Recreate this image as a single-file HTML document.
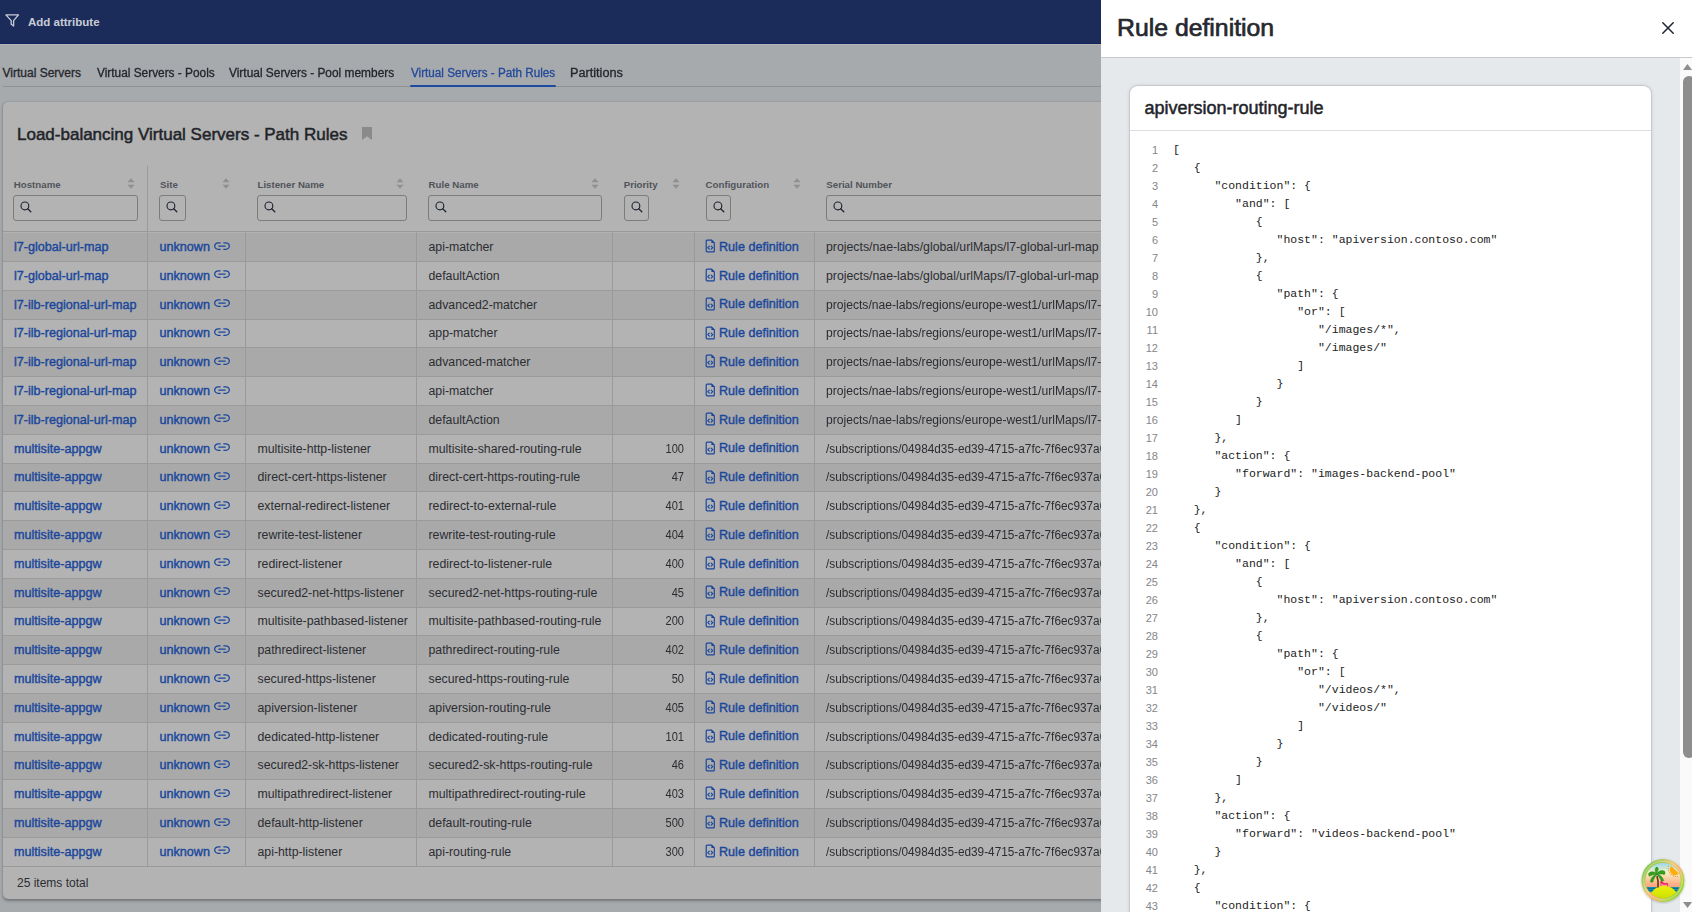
<!DOCTYPE html>
<html><head><meta charset="utf-8">
<style>
*{box-sizing:border-box}
html,body{margin:0;padding:0;width:1692px;height:912px;overflow:hidden;background:#a6aaad;font-family:"Liberation Sans",sans-serif;position:relative}
.abs{position:absolute}
#nav{left:0;top:0;width:1692px;height:44px;background:#1b2c5b;border-bottom:1px solid #14215a}
#nav .t{left:28px;top:15.5px;font-size:11.5px;font-weight:700;color:#c9ccd6;white-space:nowrap}
#nav svg{position:absolute;left:5px;top:13.6px}
#navline{left:0;top:44px;width:1101px;height:1px;background:#b3b5b6}
.tab{top:66px;font-size:12px;color:#25262c;white-space:nowrap;line-height:14px;-webkit-text-stroke:0.3px currentColor}
.tab.act{color:#23499a}
#tabline{left:3px;top:86px;width:1098px;height:1px;background:#8e9194}
#tabul{left:410px;top:85px;width:146px;height:2px;background:#1c4aa0;border-radius:1px}
#card{left:3px;top:102px;width:1200px;height:797px;background:#b3b3b3;border-radius:5px;box-shadow:0 1.5px 3px rgba(0,0,0,0.3),0 0 1px rgba(0,0,0,0.2)}
#title{left:17px;top:124.5px;font-size:17px;font-weight:400;color:#222429;white-space:nowrap;line-height:20px;-webkit-text-stroke:0.5px currentColor}
#bm{left:361.5px;top:127px}
.hl{top:179px;font-size:9.7px;font-weight:700;color:#50545a;white-space:nowrap;line-height:11px}
.sort{top:178px;color:#8e9092}
.sort svg,.sb svg,.lk svg,.fi svg{display:block}
.sb{top:195px;height:26px;border:1px solid #7c7c7c;border-radius:3px}
.sb svg{position:absolute;left:6px;top:5px;color:#1f2530}
.row{left:3px;width:1098px;height:29px}
.row.s{background:#a9a9a9}
.hd{top:231px;left:3px;width:1098px;height:1px;background:#999}
.rl{left:3px;width:1098px;height:1px;background:#9a9a9a}
.vl{width:1px;background:#9a9a9a}
.c{font-size:12.3px;color:#2c2d32;white-space:nowrap;line-height:14px}
.lnk{font-size:12.6px;font-weight:400;-webkit-text-stroke:0.4px currentColor;color:#1a479c;white-space:nowrap;line-height:14px}
.lk{position:absolute;color:#1a479c}
.fi{position:absolute;color:#1a479c}
#foot{left:17px;top:876px;font-size:12px;color:#2c2d32;white-space:nowrap;line-height:14px}
#drawer{left:1101px;top:0;width:591px;height:912px;background:#e6e9ec}
#dh{left:1101px;top:0;width:591px;height:58px;background:#fff;border-bottom:1px solid #c8cacd}
#dt{left:1117px;top:14px;font-size:24.8px;font-weight:400;color:#26282d;white-space:nowrap;line-height:28px;-webkit-text-stroke:0.7px currentColor}
#x{left:1662px;top:22px}
#ccard{left:1130px;top:86px;width:521px;height:900px;background:#fff;border-radius:8px;box-shadow:0 0 0 1px rgba(40,35,60,0.11), 0 0 3px 1.5px rgba(0,0,0,0.06)}
#ct{left:1144.5px;top:97.8px;font-size:18px;font-weight:400;color:#222429;white-space:nowrap;line-height:20px;-webkit-text-stroke:0.5px currentColor}
#cline{left:1130px;top:130px;width:521px;height:1px;background:#dcdde0}
.ln{left:1120px;width:38px;text-align:right;font-size:11px;color:#83868b;line-height:18px;white-space:nowrap}
.cd{left:1173px;font-family:"Liberation Mono",monospace;font-size:11.5px;color:#222;line-height:18px;white-space:pre}
#sbtrack{left:1680px;top:58px;width:12px;height:854px;background:#fafafa}
#thumb{left:1683px;top:76px;width:12px;height:682px;background:#8d8d8d;border-radius:6px}
#avatar{left:1641px;top:859px;width:44px;height:44px;overflow:visible}
</style></head><body>

<div class="abs" id="nav"><svg width="15" height="13" viewBox="0 0 15 13"><path d="M0.9 0.9h12.6L8.6 6.6v5.4L6.2 10.3V6.6z" fill="none" stroke="#c9ccd6" stroke-width="1.3" stroke-linejoin="round"/></svg><div class="abs t">Add attribute</div></div>
<div class="abs" id="navline"></div>
<div class="abs tab" style="left:2.5px;transform:scaleX(1);transform-origin:0 0">Virtual Servers</div>
<div class="abs tab" style="left:96.5px;transform:scaleX(0.988);transform-origin:0 0">Virtual Servers - Pools</div>
<div class="abs tab" style="left:229px;transform:scaleX(0.992);transform-origin:0 0">Virtual Servers - Pool members</div>
<div class="abs tab act" style="left:410.5px;transform:scaleX(0.975);transform-origin:0 0">Virtual Servers - Path Rules</div>
<div class="abs tab" style="left:570.4px;transform:scaleX(1.056);transform-origin:0 0">Partitions</div>
<div class="abs" id="tabline"></div><div class="abs" id="tabul"></div>
<div class="abs" id="card"></div>
<div class="abs" id="title">Load-balancing Virtual Servers - Path Rules</div>
<svg class="abs" id="bm" width="10" height="13" viewBox="0 0 10 13"><path d="M0 0h10v13L5 9.2 0 13z" fill="#8a8a8a"/></svg>
<div class="abs row s" style="top:233px;height:28px"></div>
<div class="abs row s" style="top:291px;height:28px"></div>
<div class="abs row s" style="top:348px;height:28px"></div>
<div class="abs row s" style="top:406px;height:28px"></div>
<div class="abs row s" style="top:464px;height:27px"></div>
<div class="abs row s" style="top:521px;height:28px"></div>
<div class="abs row s" style="top:579px;height:28px"></div>
<div class="abs row s" style="top:636px;height:28px"></div>
<div class="abs row s" style="top:694px;height:28px"></div>
<div class="abs row s" style="top:752px;height:27px"></div>
<div class="abs row s" style="top:809px;height:28px"></div>
<div class="abs hl" style="left:13.8px">Hostname</div>
<div class="abs sort" style="left:126.5px"><svg width="8" height="11" viewBox="0 0 8 11"><path d="M4 0.3L7.6 4.3H0.4z M4 10.7L7.6 6.7H0.4z" fill="currentColor"/></svg></div>
<div class="abs sb" style="left:13.4px;width:124.6px"><svg width="12" height="12" viewBox="0 0 12 12"><circle cx="4.9" cy="4.9" r="3.9" fill="none" stroke="currentColor" stroke-width="1.15"/><path d="M7.7 7.7l3.1 3.1" stroke="currentColor" stroke-width="1.3" stroke-linecap="round"/></svg></div>
<div class="abs hl" style="left:160px">Site</div>
<div class="abs sort" style="left:221.5px"><svg width="8" height="11" viewBox="0 0 8 11"><path d="M4 0.3L7.6 4.3H0.4z M4 10.7L7.6 6.7H0.4z" fill="currentColor"/></svg></div>
<div class="abs sb" style="left:159px;width:26.5px"><svg width="12" height="12" viewBox="0 0 12 12"><circle cx="4.9" cy="4.9" r="3.9" fill="none" stroke="currentColor" stroke-width="1.15"/><path d="M7.7 7.7l3.1 3.1" stroke="currentColor" stroke-width="1.3" stroke-linecap="round"/></svg></div>
<div class="abs hl" style="left:257.5px">Listener Name</div>
<div class="abs sort" style="left:395.5px"><svg width="8" height="11" viewBox="0 0 8 11"><path d="M4 0.3L7.6 4.3H0.4z M4 10.7L7.6 6.7H0.4z" fill="currentColor"/></svg></div>
<div class="abs sb" style="left:257.3px;width:149.3px"><svg width="12" height="12" viewBox="0 0 12 12"><circle cx="4.9" cy="4.9" r="3.9" fill="none" stroke="currentColor" stroke-width="1.15"/><path d="M7.7 7.7l3.1 3.1" stroke="currentColor" stroke-width="1.3" stroke-linecap="round"/></svg></div>
<div class="abs hl" style="left:428.6px">Rule Name</div>
<div class="abs sort" style="left:590.9px"><svg width="8" height="11" viewBox="0 0 8 11"><path d="M4 0.3L7.6 4.3H0.4z M4 10.7L7.6 6.7H0.4z" fill="currentColor"/></svg></div>
<div class="abs sb" style="left:428.4px;width:173.20000000000005px"><svg width="12" height="12" viewBox="0 0 12 12"><circle cx="4.9" cy="4.9" r="3.9" fill="none" stroke="currentColor" stroke-width="1.15"/><path d="M7.7 7.7l3.1 3.1" stroke="currentColor" stroke-width="1.3" stroke-linecap="round"/></svg></div>
<div class="abs hl" style="left:623.7px">Priority</div>
<div class="abs sort" style="left:672.4px"><svg width="8" height="11" viewBox="0 0 8 11"><path d="M4 0.3L7.6 4.3H0.4z M4 10.7L7.6 6.7H0.4z" fill="currentColor"/></svg></div>
<div class="abs sb" style="left:624.2px;width:24.799999999999955px"><svg width="12" height="12" viewBox="0 0 12 12"><circle cx="4.9" cy="4.9" r="3.9" fill="none" stroke="currentColor" stroke-width="1.15"/><path d="M7.7 7.7l3.1 3.1" stroke="currentColor" stroke-width="1.3" stroke-linecap="round"/></svg></div>
<div class="abs hl" style="left:705.6px">Configuration</div>
<div class="abs sort" style="left:793.2px"><svg width="8" height="11" viewBox="0 0 8 11"><path d="M4 0.3L7.6 4.3H0.4z M4 10.7L7.6 6.7H0.4z" fill="currentColor"/></svg></div>
<div class="abs sb" style="left:705.5px;width:25.5px"><svg width="12" height="12" viewBox="0 0 12 12"><circle cx="4.9" cy="4.9" r="3.9" fill="none" stroke="currentColor" stroke-width="1.15"/><path d="M7.7 7.7l3.1 3.1" stroke="currentColor" stroke-width="1.3" stroke-linecap="round"/></svg></div>
<div class="abs hl" style="left:826.3px">Serial Number</div>
<div class="abs sb" style="left:826px;width:374px"><svg width="12" height="12" viewBox="0 0 12 12"><circle cx="4.9" cy="4.9" r="3.9" fill="none" stroke="currentColor" stroke-width="1.15"/><path d="M7.7 7.7l3.1 3.1" stroke="currentColor" stroke-width="1.3" stroke-linecap="round"/></svg></div>
<div class="abs vl" style="left:147px;top:166px;height:66px"></div>
<div class="abs hd"></div>
<div class="abs rl" style="top:261px"></div>
<div class="abs rl" style="top:290px"></div>
<div class="abs rl" style="top:319px"></div>
<div class="abs rl" style="top:347px"></div>
<div class="abs rl" style="top:376px"></div>
<div class="abs rl" style="top:405px"></div>
<div class="abs rl" style="top:434px"></div>
<div class="abs rl" style="top:463px"></div>
<div class="abs rl" style="top:491px"></div>
<div class="abs rl" style="top:520px"></div>
<div class="abs rl" style="top:549px"></div>
<div class="abs rl" style="top:578px"></div>
<div class="abs rl" style="top:607px"></div>
<div class="abs rl" style="top:635px"></div>
<div class="abs rl" style="top:664px"></div>
<div class="abs rl" style="top:693px"></div>
<div class="abs rl" style="top:722px"></div>
<div class="abs rl" style="top:751px"></div>
<div class="abs rl" style="top:779px"></div>
<div class="abs rl" style="top:808px"></div>
<div class="abs rl" style="top:837px"></div>
<div class="abs rl" style="top:866px"></div>
<div class="abs vl" style="left:147px;top:232px;height:633.6px"></div>
<div class="abs vl" style="left:245px;top:232px;height:633.6px"></div>
<div class="abs vl" style="left:416px;top:232px;height:633.6px"></div>
<div class="abs vl" style="left:612px;top:232px;height:633.6px"></div>
<div class="abs vl" style="left:694px;top:232px;height:633.6px"></div>
<div class="abs vl" style="left:814px;top:232px;height:633.6px"></div>
<div class="abs lnk" style="left:14px;top:240.00px">l7-global-url-map</div>
<div class="abs lnk" style="left:159.5px;top:240.00px">unknown</div>
<div class="lk" style="left:213.8px;top:241.50px"><svg width="16" height="8.2" viewBox="0 0 16 9" preserveAspectRatio="none"><path d="M6.2 0.9H4.3a3.6 3.6 0 0 0 0 7.2h1.9M9.8 0.9h1.9a3.6 3.6 0 0 1 0 7.2h-1.9M4.8 4.5h6.4" fill="none" stroke="currentColor" stroke-width="1.3" stroke-linecap="round"/></svg></div>
<div class="abs c" style="left:428.5px;top:240.00px">api-matcher</div>
<div class="fi" style="left:705px;top:239.10px"><svg width="10" height="14" viewBox="0 0 10 14"><path d="M2.1 1.2H6.7L9.3 3.8V11.9A0.9 0.9 0 0 1 8.4 12.8H2.1A0.9 0.9 0 0 1 1.2 11.9V2.1A0.9 0.9 0 0 1 2.1 1.2Z" fill="none" stroke="currentColor" stroke-width="1.2" stroke-linejoin="round"/><path d="M6.4 0.7L9.8 4.1H6.4Z" fill="currentColor"/><path d="M4.3 7.2L2.8 8.7 4.3 10.2M6.2 7.2L7.7 8.7 6.2 10.2" fill="none" stroke="currentColor" stroke-width="1.2" stroke-linecap="round" stroke-linejoin="round"/></svg></div>
<div class="abs lnk" style="left:719px;top:239.70px">Rule definition</div>
<div class="abs c" style="left:826px;top:240.00px;transform:scaleX(1);transform-origin:0 0">projects/nae-labs/global/urlMaps/l7-global-url-map</div>
<div class="abs lnk" style="left:14px;top:268.80px">l7-global-url-map</div>
<div class="abs lnk" style="left:159.5px;top:268.80px">unknown</div>
<div class="lk" style="left:213.8px;top:270.30px"><svg width="16" height="8.2" viewBox="0 0 16 9" preserveAspectRatio="none"><path d="M6.2 0.9H4.3a3.6 3.6 0 0 0 0 7.2h1.9M9.8 0.9h1.9a3.6 3.6 0 0 1 0 7.2h-1.9M4.8 4.5h6.4" fill="none" stroke="currentColor" stroke-width="1.3" stroke-linecap="round"/></svg></div>
<div class="abs c" style="left:428.5px;top:268.80px">defaultAction</div>
<div class="fi" style="left:705px;top:267.90px"><svg width="10" height="14" viewBox="0 0 10 14"><path d="M2.1 1.2H6.7L9.3 3.8V11.9A0.9 0.9 0 0 1 8.4 12.8H2.1A0.9 0.9 0 0 1 1.2 11.9V2.1A0.9 0.9 0 0 1 2.1 1.2Z" fill="none" stroke="currentColor" stroke-width="1.2" stroke-linejoin="round"/><path d="M6.4 0.7L9.8 4.1H6.4Z" fill="currentColor"/><path d="M4.3 7.2L2.8 8.7 4.3 10.2M6.2 7.2L7.7 8.7 6.2 10.2" fill="none" stroke="currentColor" stroke-width="1.2" stroke-linecap="round" stroke-linejoin="round"/></svg></div>
<div class="abs lnk" style="left:719px;top:268.50px">Rule definition</div>
<div class="abs c" style="left:826px;top:268.80px;transform:scaleX(1);transform-origin:0 0">projects/nae-labs/global/urlMaps/l7-global-url-map</div>
<div class="abs lnk" style="left:14px;top:297.60px">l7-ilb-regional-url-map</div>
<div class="abs lnk" style="left:159.5px;top:297.60px">unknown</div>
<div class="lk" style="left:213.8px;top:299.10px"><svg width="16" height="8.2" viewBox="0 0 16 9" preserveAspectRatio="none"><path d="M6.2 0.9H4.3a3.6 3.6 0 0 0 0 7.2h1.9M9.8 0.9h1.9a3.6 3.6 0 0 1 0 7.2h-1.9M4.8 4.5h6.4" fill="none" stroke="currentColor" stroke-width="1.3" stroke-linecap="round"/></svg></div>
<div class="abs c" style="left:428.5px;top:297.60px">advanced2-matcher</div>
<div class="fi" style="left:705px;top:296.70px"><svg width="10" height="14" viewBox="0 0 10 14"><path d="M2.1 1.2H6.7L9.3 3.8V11.9A0.9 0.9 0 0 1 8.4 12.8H2.1A0.9 0.9 0 0 1 1.2 11.9V2.1A0.9 0.9 0 0 1 2.1 1.2Z" fill="none" stroke="currentColor" stroke-width="1.2" stroke-linejoin="round"/><path d="M6.4 0.7L9.8 4.1H6.4Z" fill="currentColor"/><path d="M4.3 7.2L2.8 8.7 4.3 10.2M6.2 7.2L7.7 8.7 6.2 10.2" fill="none" stroke="currentColor" stroke-width="1.2" stroke-linecap="round" stroke-linejoin="round"/></svg></div>
<div class="abs lnk" style="left:719px;top:297.30px">Rule definition</div>
<div class="abs c" style="left:826px;top:297.60px;transform:scaleX(0.985);transform-origin:0 0">projects/nae-labs/regions/europe-west1/urlMaps/l7-ilb-regional-url-map</div>
<div class="abs lnk" style="left:14px;top:326.40px">l7-ilb-regional-url-map</div>
<div class="abs lnk" style="left:159.5px;top:326.40px">unknown</div>
<div class="lk" style="left:213.8px;top:327.90px"><svg width="16" height="8.2" viewBox="0 0 16 9" preserveAspectRatio="none"><path d="M6.2 0.9H4.3a3.6 3.6 0 0 0 0 7.2h1.9M9.8 0.9h1.9a3.6 3.6 0 0 1 0 7.2h-1.9M4.8 4.5h6.4" fill="none" stroke="currentColor" stroke-width="1.3" stroke-linecap="round"/></svg></div>
<div class="abs c" style="left:428.5px;top:326.40px">app-matcher</div>
<div class="fi" style="left:705px;top:325.50px"><svg width="10" height="14" viewBox="0 0 10 14"><path d="M2.1 1.2H6.7L9.3 3.8V11.9A0.9 0.9 0 0 1 8.4 12.8H2.1A0.9 0.9 0 0 1 1.2 11.9V2.1A0.9 0.9 0 0 1 2.1 1.2Z" fill="none" stroke="currentColor" stroke-width="1.2" stroke-linejoin="round"/><path d="M6.4 0.7L9.8 4.1H6.4Z" fill="currentColor"/><path d="M4.3 7.2L2.8 8.7 4.3 10.2M6.2 7.2L7.7 8.7 6.2 10.2" fill="none" stroke="currentColor" stroke-width="1.2" stroke-linecap="round" stroke-linejoin="round"/></svg></div>
<div class="abs lnk" style="left:719px;top:326.10px">Rule definition</div>
<div class="abs c" style="left:826px;top:326.40px;transform:scaleX(0.985);transform-origin:0 0">projects/nae-labs/regions/europe-west1/urlMaps/l7-ilb-regional-url-map</div>
<div class="abs lnk" style="left:14px;top:355.20px">l7-ilb-regional-url-map</div>
<div class="abs lnk" style="left:159.5px;top:355.20px">unknown</div>
<div class="lk" style="left:213.8px;top:356.70px"><svg width="16" height="8.2" viewBox="0 0 16 9" preserveAspectRatio="none"><path d="M6.2 0.9H4.3a3.6 3.6 0 0 0 0 7.2h1.9M9.8 0.9h1.9a3.6 3.6 0 0 1 0 7.2h-1.9M4.8 4.5h6.4" fill="none" stroke="currentColor" stroke-width="1.3" stroke-linecap="round"/></svg></div>
<div class="abs c" style="left:428.5px;top:355.20px">advanced-matcher</div>
<div class="fi" style="left:705px;top:354.30px"><svg width="10" height="14" viewBox="0 0 10 14"><path d="M2.1 1.2H6.7L9.3 3.8V11.9A0.9 0.9 0 0 1 8.4 12.8H2.1A0.9 0.9 0 0 1 1.2 11.9V2.1A0.9 0.9 0 0 1 2.1 1.2Z" fill="none" stroke="currentColor" stroke-width="1.2" stroke-linejoin="round"/><path d="M6.4 0.7L9.8 4.1H6.4Z" fill="currentColor"/><path d="M4.3 7.2L2.8 8.7 4.3 10.2M6.2 7.2L7.7 8.7 6.2 10.2" fill="none" stroke="currentColor" stroke-width="1.2" stroke-linecap="round" stroke-linejoin="round"/></svg></div>
<div class="abs lnk" style="left:719px;top:354.90px">Rule definition</div>
<div class="abs c" style="left:826px;top:355.20px;transform:scaleX(0.985);transform-origin:0 0">projects/nae-labs/regions/europe-west1/urlMaps/l7-ilb-regional-url-map</div>
<div class="abs lnk" style="left:14px;top:384.00px">l7-ilb-regional-url-map</div>
<div class="abs lnk" style="left:159.5px;top:384.00px">unknown</div>
<div class="lk" style="left:213.8px;top:385.50px"><svg width="16" height="8.2" viewBox="0 0 16 9" preserveAspectRatio="none"><path d="M6.2 0.9H4.3a3.6 3.6 0 0 0 0 7.2h1.9M9.8 0.9h1.9a3.6 3.6 0 0 1 0 7.2h-1.9M4.8 4.5h6.4" fill="none" stroke="currentColor" stroke-width="1.3" stroke-linecap="round"/></svg></div>
<div class="abs c" style="left:428.5px;top:384.00px">api-matcher</div>
<div class="fi" style="left:705px;top:383.10px"><svg width="10" height="14" viewBox="0 0 10 14"><path d="M2.1 1.2H6.7L9.3 3.8V11.9A0.9 0.9 0 0 1 8.4 12.8H2.1A0.9 0.9 0 0 1 1.2 11.9V2.1A0.9 0.9 0 0 1 2.1 1.2Z" fill="none" stroke="currentColor" stroke-width="1.2" stroke-linejoin="round"/><path d="M6.4 0.7L9.8 4.1H6.4Z" fill="currentColor"/><path d="M4.3 7.2L2.8 8.7 4.3 10.2M6.2 7.2L7.7 8.7 6.2 10.2" fill="none" stroke="currentColor" stroke-width="1.2" stroke-linecap="round" stroke-linejoin="round"/></svg></div>
<div class="abs lnk" style="left:719px;top:383.70px">Rule definition</div>
<div class="abs c" style="left:826px;top:384.00px;transform:scaleX(0.985);transform-origin:0 0">projects/nae-labs/regions/europe-west1/urlMaps/l7-ilb-regional-url-map</div>
<div class="abs lnk" style="left:14px;top:412.80px">l7-ilb-regional-url-map</div>
<div class="abs lnk" style="left:159.5px;top:412.80px">unknown</div>
<div class="lk" style="left:213.8px;top:414.30px"><svg width="16" height="8.2" viewBox="0 0 16 9" preserveAspectRatio="none"><path d="M6.2 0.9H4.3a3.6 3.6 0 0 0 0 7.2h1.9M9.8 0.9h1.9a3.6 3.6 0 0 1 0 7.2h-1.9M4.8 4.5h6.4" fill="none" stroke="currentColor" stroke-width="1.3" stroke-linecap="round"/></svg></div>
<div class="abs c" style="left:428.5px;top:412.80px">defaultAction</div>
<div class="fi" style="left:705px;top:411.90px"><svg width="10" height="14" viewBox="0 0 10 14"><path d="M2.1 1.2H6.7L9.3 3.8V11.9A0.9 0.9 0 0 1 8.4 12.8H2.1A0.9 0.9 0 0 1 1.2 11.9V2.1A0.9 0.9 0 0 1 2.1 1.2Z" fill="none" stroke="currentColor" stroke-width="1.2" stroke-linejoin="round"/><path d="M6.4 0.7L9.8 4.1H6.4Z" fill="currentColor"/><path d="M4.3 7.2L2.8 8.7 4.3 10.2M6.2 7.2L7.7 8.7 6.2 10.2" fill="none" stroke="currentColor" stroke-width="1.2" stroke-linecap="round" stroke-linejoin="round"/></svg></div>
<div class="abs lnk" style="left:719px;top:412.50px">Rule definition</div>
<div class="abs c" style="left:826px;top:412.80px;transform:scaleX(0.985);transform-origin:0 0">projects/nae-labs/regions/europe-west1/urlMaps/l7-ilb-regional-url-map</div>
<div class="abs lnk" style="left:14px;top:441.60px">multisite-appgw</div>
<div class="abs lnk" style="left:159.5px;top:441.60px">unknown</div>
<div class="lk" style="left:213.8px;top:443.10px"><svg width="16" height="8.2" viewBox="0 0 16 9" preserveAspectRatio="none"><path d="M6.2 0.9H4.3a3.6 3.6 0 0 0 0 7.2h1.9M9.8 0.9h1.9a3.6 3.6 0 0 1 0 7.2h-1.9M4.8 4.5h6.4" fill="none" stroke="currentColor" stroke-width="1.3" stroke-linecap="round"/></svg></div>
<div class="abs c" style="left:257.5px;top:441.60px">multisite-http-listener</div>
<div class="abs c" style="left:428.5px;top:441.60px">multisite-shared-routing-rule</div>
<div class="abs c" style="left:604px;width:80px;text-align:right;top:441.60px;transform:scaleX(0.9);transform-origin:100% 0">100</div>
<div class="fi" style="left:705px;top:440.70px"><svg width="10" height="14" viewBox="0 0 10 14"><path d="M2.1 1.2H6.7L9.3 3.8V11.9A0.9 0.9 0 0 1 8.4 12.8H2.1A0.9 0.9 0 0 1 1.2 11.9V2.1A0.9 0.9 0 0 1 2.1 1.2Z" fill="none" stroke="currentColor" stroke-width="1.2" stroke-linejoin="round"/><path d="M6.4 0.7L9.8 4.1H6.4Z" fill="currentColor"/><path d="M4.3 7.2L2.8 8.7 4.3 10.2M6.2 7.2L7.7 8.7 6.2 10.2" fill="none" stroke="currentColor" stroke-width="1.2" stroke-linecap="round" stroke-linejoin="round"/></svg></div>
<div class="abs lnk" style="left:719px;top:441.30px">Rule definition</div>
<div class="abs c" style="left:826px;top:441.60px;transform:scaleX(0.96);transform-origin:0 0">/subscriptions/04984d35-ed39-4715-a7fc-7f6ec937a0e1/resourceGroups/rg/providers/Microsoft.Network/applicationGateways/multisite-appgw</div>
<div class="abs lnk" style="left:14px;top:470.40px">multisite-appgw</div>
<div class="abs lnk" style="left:159.5px;top:470.40px">unknown</div>
<div class="lk" style="left:213.8px;top:471.90px"><svg width="16" height="8.2" viewBox="0 0 16 9" preserveAspectRatio="none"><path d="M6.2 0.9H4.3a3.6 3.6 0 0 0 0 7.2h1.9M9.8 0.9h1.9a3.6 3.6 0 0 1 0 7.2h-1.9M4.8 4.5h6.4" fill="none" stroke="currentColor" stroke-width="1.3" stroke-linecap="round"/></svg></div>
<div class="abs c" style="left:257.5px;top:470.40px">direct-cert-https-listener</div>
<div class="abs c" style="left:428.5px;top:470.40px">direct-cert-https-routing-rule</div>
<div class="abs c" style="left:604px;width:80px;text-align:right;top:470.40px;transform:scaleX(0.9);transform-origin:100% 0">47</div>
<div class="fi" style="left:705px;top:469.50px"><svg width="10" height="14" viewBox="0 0 10 14"><path d="M2.1 1.2H6.7L9.3 3.8V11.9A0.9 0.9 0 0 1 8.4 12.8H2.1A0.9 0.9 0 0 1 1.2 11.9V2.1A0.9 0.9 0 0 1 2.1 1.2Z" fill="none" stroke="currentColor" stroke-width="1.2" stroke-linejoin="round"/><path d="M6.4 0.7L9.8 4.1H6.4Z" fill="currentColor"/><path d="M4.3 7.2L2.8 8.7 4.3 10.2M6.2 7.2L7.7 8.7 6.2 10.2" fill="none" stroke="currentColor" stroke-width="1.2" stroke-linecap="round" stroke-linejoin="round"/></svg></div>
<div class="abs lnk" style="left:719px;top:470.10px">Rule definition</div>
<div class="abs c" style="left:826px;top:470.40px;transform:scaleX(0.96);transform-origin:0 0">/subscriptions/04984d35-ed39-4715-a7fc-7f6ec937a0e1/resourceGroups/rg/providers/Microsoft.Network/applicationGateways/multisite-appgw</div>
<div class="abs lnk" style="left:14px;top:499.20px">multisite-appgw</div>
<div class="abs lnk" style="left:159.5px;top:499.20px">unknown</div>
<div class="lk" style="left:213.8px;top:500.70px"><svg width="16" height="8.2" viewBox="0 0 16 9" preserveAspectRatio="none"><path d="M6.2 0.9H4.3a3.6 3.6 0 0 0 0 7.2h1.9M9.8 0.9h1.9a3.6 3.6 0 0 1 0 7.2h-1.9M4.8 4.5h6.4" fill="none" stroke="currentColor" stroke-width="1.3" stroke-linecap="round"/></svg></div>
<div class="abs c" style="left:257.5px;top:499.20px">external-redirect-listener</div>
<div class="abs c" style="left:428.5px;top:499.20px">redirect-to-external-rule</div>
<div class="abs c" style="left:604px;width:80px;text-align:right;top:499.20px;transform:scaleX(0.9);transform-origin:100% 0">401</div>
<div class="fi" style="left:705px;top:498.30px"><svg width="10" height="14" viewBox="0 0 10 14"><path d="M2.1 1.2H6.7L9.3 3.8V11.9A0.9 0.9 0 0 1 8.4 12.8H2.1A0.9 0.9 0 0 1 1.2 11.9V2.1A0.9 0.9 0 0 1 2.1 1.2Z" fill="none" stroke="currentColor" stroke-width="1.2" stroke-linejoin="round"/><path d="M6.4 0.7L9.8 4.1H6.4Z" fill="currentColor"/><path d="M4.3 7.2L2.8 8.7 4.3 10.2M6.2 7.2L7.7 8.7 6.2 10.2" fill="none" stroke="currentColor" stroke-width="1.2" stroke-linecap="round" stroke-linejoin="round"/></svg></div>
<div class="abs lnk" style="left:719px;top:498.90px">Rule definition</div>
<div class="abs c" style="left:826px;top:499.20px;transform:scaleX(0.96);transform-origin:0 0">/subscriptions/04984d35-ed39-4715-a7fc-7f6ec937a0e1/resourceGroups/rg/providers/Microsoft.Network/applicationGateways/multisite-appgw</div>
<div class="abs lnk" style="left:14px;top:528.00px">multisite-appgw</div>
<div class="abs lnk" style="left:159.5px;top:528.00px">unknown</div>
<div class="lk" style="left:213.8px;top:529.50px"><svg width="16" height="8.2" viewBox="0 0 16 9" preserveAspectRatio="none"><path d="M6.2 0.9H4.3a3.6 3.6 0 0 0 0 7.2h1.9M9.8 0.9h1.9a3.6 3.6 0 0 1 0 7.2h-1.9M4.8 4.5h6.4" fill="none" stroke="currentColor" stroke-width="1.3" stroke-linecap="round"/></svg></div>
<div class="abs c" style="left:257.5px;top:528.00px">rewrite-test-listener</div>
<div class="abs c" style="left:428.5px;top:528.00px">rewrite-test-routing-rule</div>
<div class="abs c" style="left:604px;width:80px;text-align:right;top:528.00px;transform:scaleX(0.9);transform-origin:100% 0">404</div>
<div class="fi" style="left:705px;top:527.10px"><svg width="10" height="14" viewBox="0 0 10 14"><path d="M2.1 1.2H6.7L9.3 3.8V11.9A0.9 0.9 0 0 1 8.4 12.8H2.1A0.9 0.9 0 0 1 1.2 11.9V2.1A0.9 0.9 0 0 1 2.1 1.2Z" fill="none" stroke="currentColor" stroke-width="1.2" stroke-linejoin="round"/><path d="M6.4 0.7L9.8 4.1H6.4Z" fill="currentColor"/><path d="M4.3 7.2L2.8 8.7 4.3 10.2M6.2 7.2L7.7 8.7 6.2 10.2" fill="none" stroke="currentColor" stroke-width="1.2" stroke-linecap="round" stroke-linejoin="round"/></svg></div>
<div class="abs lnk" style="left:719px;top:527.70px">Rule definition</div>
<div class="abs c" style="left:826px;top:528.00px;transform:scaleX(0.96);transform-origin:0 0">/subscriptions/04984d35-ed39-4715-a7fc-7f6ec937a0e1/resourceGroups/rg/providers/Microsoft.Network/applicationGateways/multisite-appgw</div>
<div class="abs lnk" style="left:14px;top:556.80px">multisite-appgw</div>
<div class="abs lnk" style="left:159.5px;top:556.80px">unknown</div>
<div class="lk" style="left:213.8px;top:558.30px"><svg width="16" height="8.2" viewBox="0 0 16 9" preserveAspectRatio="none"><path d="M6.2 0.9H4.3a3.6 3.6 0 0 0 0 7.2h1.9M9.8 0.9h1.9a3.6 3.6 0 0 1 0 7.2h-1.9M4.8 4.5h6.4" fill="none" stroke="currentColor" stroke-width="1.3" stroke-linecap="round"/></svg></div>
<div class="abs c" style="left:257.5px;top:556.80px">redirect-listener</div>
<div class="abs c" style="left:428.5px;top:556.80px">redirect-to-listener-rule</div>
<div class="abs c" style="left:604px;width:80px;text-align:right;top:556.80px;transform:scaleX(0.9);transform-origin:100% 0">400</div>
<div class="fi" style="left:705px;top:555.90px"><svg width="10" height="14" viewBox="0 0 10 14"><path d="M2.1 1.2H6.7L9.3 3.8V11.9A0.9 0.9 0 0 1 8.4 12.8H2.1A0.9 0.9 0 0 1 1.2 11.9V2.1A0.9 0.9 0 0 1 2.1 1.2Z" fill="none" stroke="currentColor" stroke-width="1.2" stroke-linejoin="round"/><path d="M6.4 0.7L9.8 4.1H6.4Z" fill="currentColor"/><path d="M4.3 7.2L2.8 8.7 4.3 10.2M6.2 7.2L7.7 8.7 6.2 10.2" fill="none" stroke="currentColor" stroke-width="1.2" stroke-linecap="round" stroke-linejoin="round"/></svg></div>
<div class="abs lnk" style="left:719px;top:556.50px">Rule definition</div>
<div class="abs c" style="left:826px;top:556.80px;transform:scaleX(0.96);transform-origin:0 0">/subscriptions/04984d35-ed39-4715-a7fc-7f6ec937a0e1/resourceGroups/rg/providers/Microsoft.Network/applicationGateways/multisite-appgw</div>
<div class="abs lnk" style="left:14px;top:585.60px">multisite-appgw</div>
<div class="abs lnk" style="left:159.5px;top:585.60px">unknown</div>
<div class="lk" style="left:213.8px;top:587.10px"><svg width="16" height="8.2" viewBox="0 0 16 9" preserveAspectRatio="none"><path d="M6.2 0.9H4.3a3.6 3.6 0 0 0 0 7.2h1.9M9.8 0.9h1.9a3.6 3.6 0 0 1 0 7.2h-1.9M4.8 4.5h6.4" fill="none" stroke="currentColor" stroke-width="1.3" stroke-linecap="round"/></svg></div>
<div class="abs c" style="left:257.5px;top:585.60px">secured2-net-https-listener</div>
<div class="abs c" style="left:428.5px;top:585.60px">secured2-net-https-routing-rule</div>
<div class="abs c" style="left:604px;width:80px;text-align:right;top:585.60px;transform:scaleX(0.9);transform-origin:100% 0">45</div>
<div class="fi" style="left:705px;top:584.70px"><svg width="10" height="14" viewBox="0 0 10 14"><path d="M2.1 1.2H6.7L9.3 3.8V11.9A0.9 0.9 0 0 1 8.4 12.8H2.1A0.9 0.9 0 0 1 1.2 11.9V2.1A0.9 0.9 0 0 1 2.1 1.2Z" fill="none" stroke="currentColor" stroke-width="1.2" stroke-linejoin="round"/><path d="M6.4 0.7L9.8 4.1H6.4Z" fill="currentColor"/><path d="M4.3 7.2L2.8 8.7 4.3 10.2M6.2 7.2L7.7 8.7 6.2 10.2" fill="none" stroke="currentColor" stroke-width="1.2" stroke-linecap="round" stroke-linejoin="round"/></svg></div>
<div class="abs lnk" style="left:719px;top:585.30px">Rule definition</div>
<div class="abs c" style="left:826px;top:585.60px;transform:scaleX(0.96);transform-origin:0 0">/subscriptions/04984d35-ed39-4715-a7fc-7f6ec937a0e1/resourceGroups/rg/providers/Microsoft.Network/applicationGateways/multisite-appgw</div>
<div class="abs lnk" style="left:14px;top:614.40px">multisite-appgw</div>
<div class="abs lnk" style="left:159.5px;top:614.40px">unknown</div>
<div class="lk" style="left:213.8px;top:615.90px"><svg width="16" height="8.2" viewBox="0 0 16 9" preserveAspectRatio="none"><path d="M6.2 0.9H4.3a3.6 3.6 0 0 0 0 7.2h1.9M9.8 0.9h1.9a3.6 3.6 0 0 1 0 7.2h-1.9M4.8 4.5h6.4" fill="none" stroke="currentColor" stroke-width="1.3" stroke-linecap="round"/></svg></div>
<div class="abs c" style="left:257.5px;top:614.40px">multisite-pathbased-listener</div>
<div class="abs c" style="left:428.5px;top:614.40px">multisite-pathbased-routing-rule</div>
<div class="abs c" style="left:604px;width:80px;text-align:right;top:614.40px;transform:scaleX(0.9);transform-origin:100% 0">200</div>
<div class="fi" style="left:705px;top:613.50px"><svg width="10" height="14" viewBox="0 0 10 14"><path d="M2.1 1.2H6.7L9.3 3.8V11.9A0.9 0.9 0 0 1 8.4 12.8H2.1A0.9 0.9 0 0 1 1.2 11.9V2.1A0.9 0.9 0 0 1 2.1 1.2Z" fill="none" stroke="currentColor" stroke-width="1.2" stroke-linejoin="round"/><path d="M6.4 0.7L9.8 4.1H6.4Z" fill="currentColor"/><path d="M4.3 7.2L2.8 8.7 4.3 10.2M6.2 7.2L7.7 8.7 6.2 10.2" fill="none" stroke="currentColor" stroke-width="1.2" stroke-linecap="round" stroke-linejoin="round"/></svg></div>
<div class="abs lnk" style="left:719px;top:614.10px">Rule definition</div>
<div class="abs c" style="left:826px;top:614.40px;transform:scaleX(0.96);transform-origin:0 0">/subscriptions/04984d35-ed39-4715-a7fc-7f6ec937a0e1/resourceGroups/rg/providers/Microsoft.Network/applicationGateways/multisite-appgw</div>
<div class="abs lnk" style="left:14px;top:643.20px">multisite-appgw</div>
<div class="abs lnk" style="left:159.5px;top:643.20px">unknown</div>
<div class="lk" style="left:213.8px;top:644.70px"><svg width="16" height="8.2" viewBox="0 0 16 9" preserveAspectRatio="none"><path d="M6.2 0.9H4.3a3.6 3.6 0 0 0 0 7.2h1.9M9.8 0.9h1.9a3.6 3.6 0 0 1 0 7.2h-1.9M4.8 4.5h6.4" fill="none" stroke="currentColor" stroke-width="1.3" stroke-linecap="round"/></svg></div>
<div class="abs c" style="left:257.5px;top:643.20px">pathredirect-listener</div>
<div class="abs c" style="left:428.5px;top:643.20px">pathredirect-routing-rule</div>
<div class="abs c" style="left:604px;width:80px;text-align:right;top:643.20px;transform:scaleX(0.9);transform-origin:100% 0">402</div>
<div class="fi" style="left:705px;top:642.30px"><svg width="10" height="14" viewBox="0 0 10 14"><path d="M2.1 1.2H6.7L9.3 3.8V11.9A0.9 0.9 0 0 1 8.4 12.8H2.1A0.9 0.9 0 0 1 1.2 11.9V2.1A0.9 0.9 0 0 1 2.1 1.2Z" fill="none" stroke="currentColor" stroke-width="1.2" stroke-linejoin="round"/><path d="M6.4 0.7L9.8 4.1H6.4Z" fill="currentColor"/><path d="M4.3 7.2L2.8 8.7 4.3 10.2M6.2 7.2L7.7 8.7 6.2 10.2" fill="none" stroke="currentColor" stroke-width="1.2" stroke-linecap="round" stroke-linejoin="round"/></svg></div>
<div class="abs lnk" style="left:719px;top:642.90px">Rule definition</div>
<div class="abs c" style="left:826px;top:643.20px;transform:scaleX(0.96);transform-origin:0 0">/subscriptions/04984d35-ed39-4715-a7fc-7f6ec937a0e1/resourceGroups/rg/providers/Microsoft.Network/applicationGateways/multisite-appgw</div>
<div class="abs lnk" style="left:14px;top:672.00px">multisite-appgw</div>
<div class="abs lnk" style="left:159.5px;top:672.00px">unknown</div>
<div class="lk" style="left:213.8px;top:673.50px"><svg width="16" height="8.2" viewBox="0 0 16 9" preserveAspectRatio="none"><path d="M6.2 0.9H4.3a3.6 3.6 0 0 0 0 7.2h1.9M9.8 0.9h1.9a3.6 3.6 0 0 1 0 7.2h-1.9M4.8 4.5h6.4" fill="none" stroke="currentColor" stroke-width="1.3" stroke-linecap="round"/></svg></div>
<div class="abs c" style="left:257.5px;top:672.00px">secured-https-listener</div>
<div class="abs c" style="left:428.5px;top:672.00px">secured-https-routing-rule</div>
<div class="abs c" style="left:604px;width:80px;text-align:right;top:672.00px;transform:scaleX(0.9);transform-origin:100% 0">50</div>
<div class="fi" style="left:705px;top:671.10px"><svg width="10" height="14" viewBox="0 0 10 14"><path d="M2.1 1.2H6.7L9.3 3.8V11.9A0.9 0.9 0 0 1 8.4 12.8H2.1A0.9 0.9 0 0 1 1.2 11.9V2.1A0.9 0.9 0 0 1 2.1 1.2Z" fill="none" stroke="currentColor" stroke-width="1.2" stroke-linejoin="round"/><path d="M6.4 0.7L9.8 4.1H6.4Z" fill="currentColor"/><path d="M4.3 7.2L2.8 8.7 4.3 10.2M6.2 7.2L7.7 8.7 6.2 10.2" fill="none" stroke="currentColor" stroke-width="1.2" stroke-linecap="round" stroke-linejoin="round"/></svg></div>
<div class="abs lnk" style="left:719px;top:671.70px">Rule definition</div>
<div class="abs c" style="left:826px;top:672.00px;transform:scaleX(0.96);transform-origin:0 0">/subscriptions/04984d35-ed39-4715-a7fc-7f6ec937a0e1/resourceGroups/rg/providers/Microsoft.Network/applicationGateways/multisite-appgw</div>
<div class="abs lnk" style="left:14px;top:700.80px">multisite-appgw</div>
<div class="abs lnk" style="left:159.5px;top:700.80px">unknown</div>
<div class="lk" style="left:213.8px;top:702.30px"><svg width="16" height="8.2" viewBox="0 0 16 9" preserveAspectRatio="none"><path d="M6.2 0.9H4.3a3.6 3.6 0 0 0 0 7.2h1.9M9.8 0.9h1.9a3.6 3.6 0 0 1 0 7.2h-1.9M4.8 4.5h6.4" fill="none" stroke="currentColor" stroke-width="1.3" stroke-linecap="round"/></svg></div>
<div class="abs c" style="left:257.5px;top:700.80px">apiversion-listener</div>
<div class="abs c" style="left:428.5px;top:700.80px">apiversion-routing-rule</div>
<div class="abs c" style="left:604px;width:80px;text-align:right;top:700.80px;transform:scaleX(0.9);transform-origin:100% 0">405</div>
<div class="fi" style="left:705px;top:699.90px"><svg width="10" height="14" viewBox="0 0 10 14"><path d="M2.1 1.2H6.7L9.3 3.8V11.9A0.9 0.9 0 0 1 8.4 12.8H2.1A0.9 0.9 0 0 1 1.2 11.9V2.1A0.9 0.9 0 0 1 2.1 1.2Z" fill="none" stroke="currentColor" stroke-width="1.2" stroke-linejoin="round"/><path d="M6.4 0.7L9.8 4.1H6.4Z" fill="currentColor"/><path d="M4.3 7.2L2.8 8.7 4.3 10.2M6.2 7.2L7.7 8.7 6.2 10.2" fill="none" stroke="currentColor" stroke-width="1.2" stroke-linecap="round" stroke-linejoin="round"/></svg></div>
<div class="abs lnk" style="left:719px;top:700.50px">Rule definition</div>
<div class="abs c" style="left:826px;top:700.80px;transform:scaleX(0.96);transform-origin:0 0">/subscriptions/04984d35-ed39-4715-a7fc-7f6ec937a0e1/resourceGroups/rg/providers/Microsoft.Network/applicationGateways/multisite-appgw</div>
<div class="abs lnk" style="left:14px;top:729.60px">multisite-appgw</div>
<div class="abs lnk" style="left:159.5px;top:729.60px">unknown</div>
<div class="lk" style="left:213.8px;top:731.10px"><svg width="16" height="8.2" viewBox="0 0 16 9" preserveAspectRatio="none"><path d="M6.2 0.9H4.3a3.6 3.6 0 0 0 0 7.2h1.9M9.8 0.9h1.9a3.6 3.6 0 0 1 0 7.2h-1.9M4.8 4.5h6.4" fill="none" stroke="currentColor" stroke-width="1.3" stroke-linecap="round"/></svg></div>
<div class="abs c" style="left:257.5px;top:729.60px">dedicated-http-listener</div>
<div class="abs c" style="left:428.5px;top:729.60px">dedicated-routing-rule</div>
<div class="abs c" style="left:604px;width:80px;text-align:right;top:729.60px;transform:scaleX(0.9);transform-origin:100% 0">101</div>
<div class="fi" style="left:705px;top:728.70px"><svg width="10" height="14" viewBox="0 0 10 14"><path d="M2.1 1.2H6.7L9.3 3.8V11.9A0.9 0.9 0 0 1 8.4 12.8H2.1A0.9 0.9 0 0 1 1.2 11.9V2.1A0.9 0.9 0 0 1 2.1 1.2Z" fill="none" stroke="currentColor" stroke-width="1.2" stroke-linejoin="round"/><path d="M6.4 0.7L9.8 4.1H6.4Z" fill="currentColor"/><path d="M4.3 7.2L2.8 8.7 4.3 10.2M6.2 7.2L7.7 8.7 6.2 10.2" fill="none" stroke="currentColor" stroke-width="1.2" stroke-linecap="round" stroke-linejoin="round"/></svg></div>
<div class="abs lnk" style="left:719px;top:729.30px">Rule definition</div>
<div class="abs c" style="left:826px;top:729.60px;transform:scaleX(0.96);transform-origin:0 0">/subscriptions/04984d35-ed39-4715-a7fc-7f6ec937a0e1/resourceGroups/rg/providers/Microsoft.Network/applicationGateways/multisite-appgw</div>
<div class="abs lnk" style="left:14px;top:758.40px">multisite-appgw</div>
<div class="abs lnk" style="left:159.5px;top:758.40px">unknown</div>
<div class="lk" style="left:213.8px;top:759.90px"><svg width="16" height="8.2" viewBox="0 0 16 9" preserveAspectRatio="none"><path d="M6.2 0.9H4.3a3.6 3.6 0 0 0 0 7.2h1.9M9.8 0.9h1.9a3.6 3.6 0 0 1 0 7.2h-1.9M4.8 4.5h6.4" fill="none" stroke="currentColor" stroke-width="1.3" stroke-linecap="round"/></svg></div>
<div class="abs c" style="left:257.5px;top:758.40px">secured2-sk-https-listener</div>
<div class="abs c" style="left:428.5px;top:758.40px">secured2-sk-https-routing-rule</div>
<div class="abs c" style="left:604px;width:80px;text-align:right;top:758.40px;transform:scaleX(0.9);transform-origin:100% 0">46</div>
<div class="fi" style="left:705px;top:757.50px"><svg width="10" height="14" viewBox="0 0 10 14"><path d="M2.1 1.2H6.7L9.3 3.8V11.9A0.9 0.9 0 0 1 8.4 12.8H2.1A0.9 0.9 0 0 1 1.2 11.9V2.1A0.9 0.9 0 0 1 2.1 1.2Z" fill="none" stroke="currentColor" stroke-width="1.2" stroke-linejoin="round"/><path d="M6.4 0.7L9.8 4.1H6.4Z" fill="currentColor"/><path d="M4.3 7.2L2.8 8.7 4.3 10.2M6.2 7.2L7.7 8.7 6.2 10.2" fill="none" stroke="currentColor" stroke-width="1.2" stroke-linecap="round" stroke-linejoin="round"/></svg></div>
<div class="abs lnk" style="left:719px;top:758.10px">Rule definition</div>
<div class="abs c" style="left:826px;top:758.40px;transform:scaleX(0.96);transform-origin:0 0">/subscriptions/04984d35-ed39-4715-a7fc-7f6ec937a0e1/resourceGroups/rg/providers/Microsoft.Network/applicationGateways/multisite-appgw</div>
<div class="abs lnk" style="left:14px;top:787.20px">multisite-appgw</div>
<div class="abs lnk" style="left:159.5px;top:787.20px">unknown</div>
<div class="lk" style="left:213.8px;top:788.70px"><svg width="16" height="8.2" viewBox="0 0 16 9" preserveAspectRatio="none"><path d="M6.2 0.9H4.3a3.6 3.6 0 0 0 0 7.2h1.9M9.8 0.9h1.9a3.6 3.6 0 0 1 0 7.2h-1.9M4.8 4.5h6.4" fill="none" stroke="currentColor" stroke-width="1.3" stroke-linecap="round"/></svg></div>
<div class="abs c" style="left:257.5px;top:787.20px">multipathredirect-listener</div>
<div class="abs c" style="left:428.5px;top:787.20px">multipathredirect-routing-rule</div>
<div class="abs c" style="left:604px;width:80px;text-align:right;top:787.20px;transform:scaleX(0.9);transform-origin:100% 0">403</div>
<div class="fi" style="left:705px;top:786.30px"><svg width="10" height="14" viewBox="0 0 10 14"><path d="M2.1 1.2H6.7L9.3 3.8V11.9A0.9 0.9 0 0 1 8.4 12.8H2.1A0.9 0.9 0 0 1 1.2 11.9V2.1A0.9 0.9 0 0 1 2.1 1.2Z" fill="none" stroke="currentColor" stroke-width="1.2" stroke-linejoin="round"/><path d="M6.4 0.7L9.8 4.1H6.4Z" fill="currentColor"/><path d="M4.3 7.2L2.8 8.7 4.3 10.2M6.2 7.2L7.7 8.7 6.2 10.2" fill="none" stroke="currentColor" stroke-width="1.2" stroke-linecap="round" stroke-linejoin="round"/></svg></div>
<div class="abs lnk" style="left:719px;top:786.90px">Rule definition</div>
<div class="abs c" style="left:826px;top:787.20px;transform:scaleX(0.96);transform-origin:0 0">/subscriptions/04984d35-ed39-4715-a7fc-7f6ec937a0e1/resourceGroups/rg/providers/Microsoft.Network/applicationGateways/multisite-appgw</div>
<div class="abs lnk" style="left:14px;top:816.00px">multisite-appgw</div>
<div class="abs lnk" style="left:159.5px;top:816.00px">unknown</div>
<div class="lk" style="left:213.8px;top:817.50px"><svg width="16" height="8.2" viewBox="0 0 16 9" preserveAspectRatio="none"><path d="M6.2 0.9H4.3a3.6 3.6 0 0 0 0 7.2h1.9M9.8 0.9h1.9a3.6 3.6 0 0 1 0 7.2h-1.9M4.8 4.5h6.4" fill="none" stroke="currentColor" stroke-width="1.3" stroke-linecap="round"/></svg></div>
<div class="abs c" style="left:257.5px;top:816.00px">default-http-listener</div>
<div class="abs c" style="left:428.5px;top:816.00px">default-routing-rule</div>
<div class="abs c" style="left:604px;width:80px;text-align:right;top:816.00px;transform:scaleX(0.9);transform-origin:100% 0">500</div>
<div class="fi" style="left:705px;top:815.10px"><svg width="10" height="14" viewBox="0 0 10 14"><path d="M2.1 1.2H6.7L9.3 3.8V11.9A0.9 0.9 0 0 1 8.4 12.8H2.1A0.9 0.9 0 0 1 1.2 11.9V2.1A0.9 0.9 0 0 1 2.1 1.2Z" fill="none" stroke="currentColor" stroke-width="1.2" stroke-linejoin="round"/><path d="M6.4 0.7L9.8 4.1H6.4Z" fill="currentColor"/><path d="M4.3 7.2L2.8 8.7 4.3 10.2M6.2 7.2L7.7 8.7 6.2 10.2" fill="none" stroke="currentColor" stroke-width="1.2" stroke-linecap="round" stroke-linejoin="round"/></svg></div>
<div class="abs lnk" style="left:719px;top:815.70px">Rule definition</div>
<div class="abs c" style="left:826px;top:816.00px;transform:scaleX(0.96);transform-origin:0 0">/subscriptions/04984d35-ed39-4715-a7fc-7f6ec937a0e1/resourceGroups/rg/providers/Microsoft.Network/applicationGateways/multisite-appgw</div>
<div class="abs lnk" style="left:14px;top:844.80px">multisite-appgw</div>
<div class="abs lnk" style="left:159.5px;top:844.80px">unknown</div>
<div class="lk" style="left:213.8px;top:846.30px"><svg width="16" height="8.2" viewBox="0 0 16 9" preserveAspectRatio="none"><path d="M6.2 0.9H4.3a3.6 3.6 0 0 0 0 7.2h1.9M9.8 0.9h1.9a3.6 3.6 0 0 1 0 7.2h-1.9M4.8 4.5h6.4" fill="none" stroke="currentColor" stroke-width="1.3" stroke-linecap="round"/></svg></div>
<div class="abs c" style="left:257.5px;top:844.80px">api-http-listener</div>
<div class="abs c" style="left:428.5px;top:844.80px">api-routing-rule</div>
<div class="abs c" style="left:604px;width:80px;text-align:right;top:844.80px;transform:scaleX(0.9);transform-origin:100% 0">300</div>
<div class="fi" style="left:705px;top:843.90px"><svg width="10" height="14" viewBox="0 0 10 14"><path d="M2.1 1.2H6.7L9.3 3.8V11.9A0.9 0.9 0 0 1 8.4 12.8H2.1A0.9 0.9 0 0 1 1.2 11.9V2.1A0.9 0.9 0 0 1 2.1 1.2Z" fill="none" stroke="currentColor" stroke-width="1.2" stroke-linejoin="round"/><path d="M6.4 0.7L9.8 4.1H6.4Z" fill="currentColor"/><path d="M4.3 7.2L2.8 8.7 4.3 10.2M6.2 7.2L7.7 8.7 6.2 10.2" fill="none" stroke="currentColor" stroke-width="1.2" stroke-linecap="round" stroke-linejoin="round"/></svg></div>
<div class="abs lnk" style="left:719px;top:844.50px">Rule definition</div>
<div class="abs c" style="left:826px;top:844.80px;transform:scaleX(0.96);transform-origin:0 0">/subscriptions/04984d35-ed39-4715-a7fc-7f6ec937a0e1/resourceGroups/rg/providers/Microsoft.Network/applicationGateways/multisite-appgw</div>
<div class="abs" id="foot">25 items total</div>
<div class="abs" id="drawer"></div>
<div class="abs" id="dh"></div>
<div class="abs" id="dt">Rule definition</div>
<svg class="abs" id="x" width="12" height="12" viewBox="0 0 12 12"><path d="M0.8 0.8l10.4 10.4M11.2 0.8L0.8 11.2" stroke="#1e2235" stroke-width="1.5" stroke-linecap="round"/></svg>
<div class="abs" id="ccard"></div>
<div class="abs" id="ct">apiversion-routing-rule</div>
<div class="abs" id="cline"></div>
<div class="abs ln" style="top:141px">1</div>
<div class="abs cd" style="top:141px">[</div>
<div class="abs ln" style="top:159px">2</div>
<div class="abs cd" style="top:159px">   {</div>
<div class="abs ln" style="top:177px">3</div>
<div class="abs cd" style="top:177px">      "condition": {</div>
<div class="abs ln" style="top:195px">4</div>
<div class="abs cd" style="top:195px">         "and": [</div>
<div class="abs ln" style="top:213px">5</div>
<div class="abs cd" style="top:213px">            {</div>
<div class="abs ln" style="top:231px">6</div>
<div class="abs cd" style="top:231px">               "host": "apiversion.contoso.com"</div>
<div class="abs ln" style="top:249px">7</div>
<div class="abs cd" style="top:249px">            },</div>
<div class="abs ln" style="top:267px">8</div>
<div class="abs cd" style="top:267px">            {</div>
<div class="abs ln" style="top:285px">9</div>
<div class="abs cd" style="top:285px">               "path": {</div>
<div class="abs ln" style="top:303px">10</div>
<div class="abs cd" style="top:303px">                  "or": [</div>
<div class="abs ln" style="top:321px">11</div>
<div class="abs cd" style="top:321px">                     "/images/*",</div>
<div class="abs ln" style="top:339px">12</div>
<div class="abs cd" style="top:339px">                     "/images/"</div>
<div class="abs ln" style="top:357px">13</div>
<div class="abs cd" style="top:357px">                  ]</div>
<div class="abs ln" style="top:375px">14</div>
<div class="abs cd" style="top:375px">               }</div>
<div class="abs ln" style="top:393px">15</div>
<div class="abs cd" style="top:393px">            }</div>
<div class="abs ln" style="top:411px">16</div>
<div class="abs cd" style="top:411px">         ]</div>
<div class="abs ln" style="top:429px">17</div>
<div class="abs cd" style="top:429px">      },</div>
<div class="abs ln" style="top:447px">18</div>
<div class="abs cd" style="top:447px">      "action": {</div>
<div class="abs ln" style="top:465px">19</div>
<div class="abs cd" style="top:465px">         "forward": "images-backend-pool"</div>
<div class="abs ln" style="top:483px">20</div>
<div class="abs cd" style="top:483px">      }</div>
<div class="abs ln" style="top:501px">21</div>
<div class="abs cd" style="top:501px">   },</div>
<div class="abs ln" style="top:519px">22</div>
<div class="abs cd" style="top:519px">   {</div>
<div class="abs ln" style="top:537px">23</div>
<div class="abs cd" style="top:537px">      "condition": {</div>
<div class="abs ln" style="top:555px">24</div>
<div class="abs cd" style="top:555px">         "and": [</div>
<div class="abs ln" style="top:573px">25</div>
<div class="abs cd" style="top:573px">            {</div>
<div class="abs ln" style="top:591px">26</div>
<div class="abs cd" style="top:591px">               "host": "apiversion.contoso.com"</div>
<div class="abs ln" style="top:609px">27</div>
<div class="abs cd" style="top:609px">            },</div>
<div class="abs ln" style="top:627px">28</div>
<div class="abs cd" style="top:627px">            {</div>
<div class="abs ln" style="top:645px">29</div>
<div class="abs cd" style="top:645px">               "path": {</div>
<div class="abs ln" style="top:663px">30</div>
<div class="abs cd" style="top:663px">                  "or": [</div>
<div class="abs ln" style="top:681px">31</div>
<div class="abs cd" style="top:681px">                     "/videos/*",</div>
<div class="abs ln" style="top:699px">32</div>
<div class="abs cd" style="top:699px">                     "/videos/"</div>
<div class="abs ln" style="top:717px">33</div>
<div class="abs cd" style="top:717px">                  ]</div>
<div class="abs ln" style="top:735px">34</div>
<div class="abs cd" style="top:735px">               }</div>
<div class="abs ln" style="top:753px">35</div>
<div class="abs cd" style="top:753px">            }</div>
<div class="abs ln" style="top:771px">36</div>
<div class="abs cd" style="top:771px">         ]</div>
<div class="abs ln" style="top:789px">37</div>
<div class="abs cd" style="top:789px">      },</div>
<div class="abs ln" style="top:807px">38</div>
<div class="abs cd" style="top:807px">      "action": {</div>
<div class="abs ln" style="top:825px">39</div>
<div class="abs cd" style="top:825px">         "forward": "videos-backend-pool"</div>
<div class="abs ln" style="top:843px">40</div>
<div class="abs cd" style="top:843px">      }</div>
<div class="abs ln" style="top:861px">41</div>
<div class="abs cd" style="top:861px">   },</div>
<div class="abs ln" style="top:879px">42</div>
<div class="abs cd" style="top:879px">   {</div>
<div class="abs ln" style="top:897px">43</div>
<div class="abs cd" style="top:897px">      "condition": {</div>
<div class="abs ln" style="top:915px">44</div>
<div class="abs cd" style="top:915px">         "and": [</div>
<div class="abs" id="sbtrack"></div>
<svg class="abs" style="left:1683px;top:64px" width="9" height="6" viewBox="0 0 9 6"><path d="M4.5 0L9 6H0z" fill="#8d8d8d"/></svg>
<div class="abs" id="thumb"></div>
<svg class="abs" style="left:1683px;top:902px" width="9" height="6" viewBox="0 0 9 6"><path d="M4.5 6L9 0H0z" fill="#8d8d8d"/></svg>
<svg class="abs" id="avatar" width="44" height="44" viewBox="0 0 44 44">
<defs>
<linearGradient id="sky" x1="0" y1="0" x2="0" y2="1"><stop offset="0.05" stop-color="#86d3f2"/><stop offset="0.3" stop-color="#f4f3c4"/><stop offset="0.55" stop-color="#fdb58a"/><stop offset="0.72" stop-color="#fc8d78"/></linearGradient>
<linearGradient id="ring" x1="0" y1="0.2" x2="0.9" y2="1"><stop offset="0" stop-color="#74c845"/><stop offset="0.4" stop-color="#e9c86a"/><stop offset="0.55" stop-color="#f7b26c"/><stop offset="0.8" stop-color="#a6d83a"/><stop offset="1" stop-color="#7cc428"/></linearGradient>
<linearGradient id="isl" x1="0" y1="0" x2="0" y2="1"><stop offset="0" stop-color="#eef00a"/><stop offset="0.6" stop-color="#c8e000"/><stop offset="1" stop-color="#5a9a08"/></linearGradient>
<clipPath id="cc"><circle cx="22" cy="21.5" r="17.6"/></clipPath>
<filter id="sh" x="-20%" y="-20%" width="140%" height="140%"><feDropShadow dx="0" dy="0.6" stdDeviation="0.9" flood-opacity="0.3"/></filter>
</defs>
<circle cx="22" cy="21.5" r="21.5" fill="url(#ring)" filter="url(#sh)"/>
<circle cx="22" cy="21.5" r="19.3" fill="none" stroke="#ffffff" stroke-opacity="0.3" stroke-width="1.2"/>
<g clip-path="url(#cc)">
<rect x="0" y="0" width="44" height="44" fill="url(#sky)"/>
<path d="M30.2 7A5.4 5.4 0 0 0 38 14.5Z" fill="#fdae0e"/>
<g fill="#f57f2e"><circle cx="27.3" cy="7.3" r="0.5"/><circle cx="27.2" cy="9.6" r="0.55"/><circle cx="27.6" cy="11.8" r="0.6"/><circle cx="28.6" cy="13.8" r="0.6"/><circle cx="30.1" cy="15.6" r="0.6"/><circle cx="32.2" cy="16.9" r="0.65"/><circle cx="34.5" cy="17.5" r="0.6"/><circle cx="36.6" cy="17.6" r="0.5"/></g>
<rect x="0" y="28" width="44" height="5" fill="#1799b6"/>
<path d="M0 29.3h44M0 31.4h44" stroke="#0b5f86" stroke-width="0.9"/>
<ellipse cx="23" cy="38" rx="13.5" ry="11" fill="url(#isl)"/>
<path d="M17 28.5c0.4-4 0.2-8 -1-11.5" stroke="#6e3a10" stroke-width="1.7" fill="none"/>
<g fill="#34a01f" stroke="#1f7a12" stroke-width="0.4">
<path d="M16 15.5c-1.5-2.8-5.5-3.8-8.3-1.2c-0.4 1.6 0.2 2.6 0.8 3c2.2-1.6 5-2 7.5-1.8z"/>
<path d="M16 15.5c0.5-3.4 4.8-5 7.8-3c0.6 1.4 0.2 2.5-0.4 3c-2.3-0.8-5-0.6-7.4 0z"/>
<path d="M16 15.5c-3.2 0.2-6.2 3.3-6.6 7.2c1 0.8 2 0.6 2.6 0c0.6-2.8 2.2-5.2 4-7.2z"/>
<path d="M16 15.5c3 0 5.8 2.6 6.6 6c-0.6 1-1.8 1-2.4 0.5c-0.9-2.5-2.4-4.6-4.2-6.5z"/>
<path d="M16 15.5c-2-2-2.6-5.2-0.6-7.4c1.4 0.2 2 1 2 2c-0.8 1.6-1.2 3.5-1.4 5.4z"/>
</g>
<path d="M19 23.5l1.2-1.6 3.2 2.2h3.4l0.6 1.6h-5.2z" fill="#ea2f73"/>
<path d="M20.2 22l-0.3 5M26.5 25.5l0.2 2" stroke="#b01850" stroke-width="0.6"/>
</g>
</svg>
</body></html>
